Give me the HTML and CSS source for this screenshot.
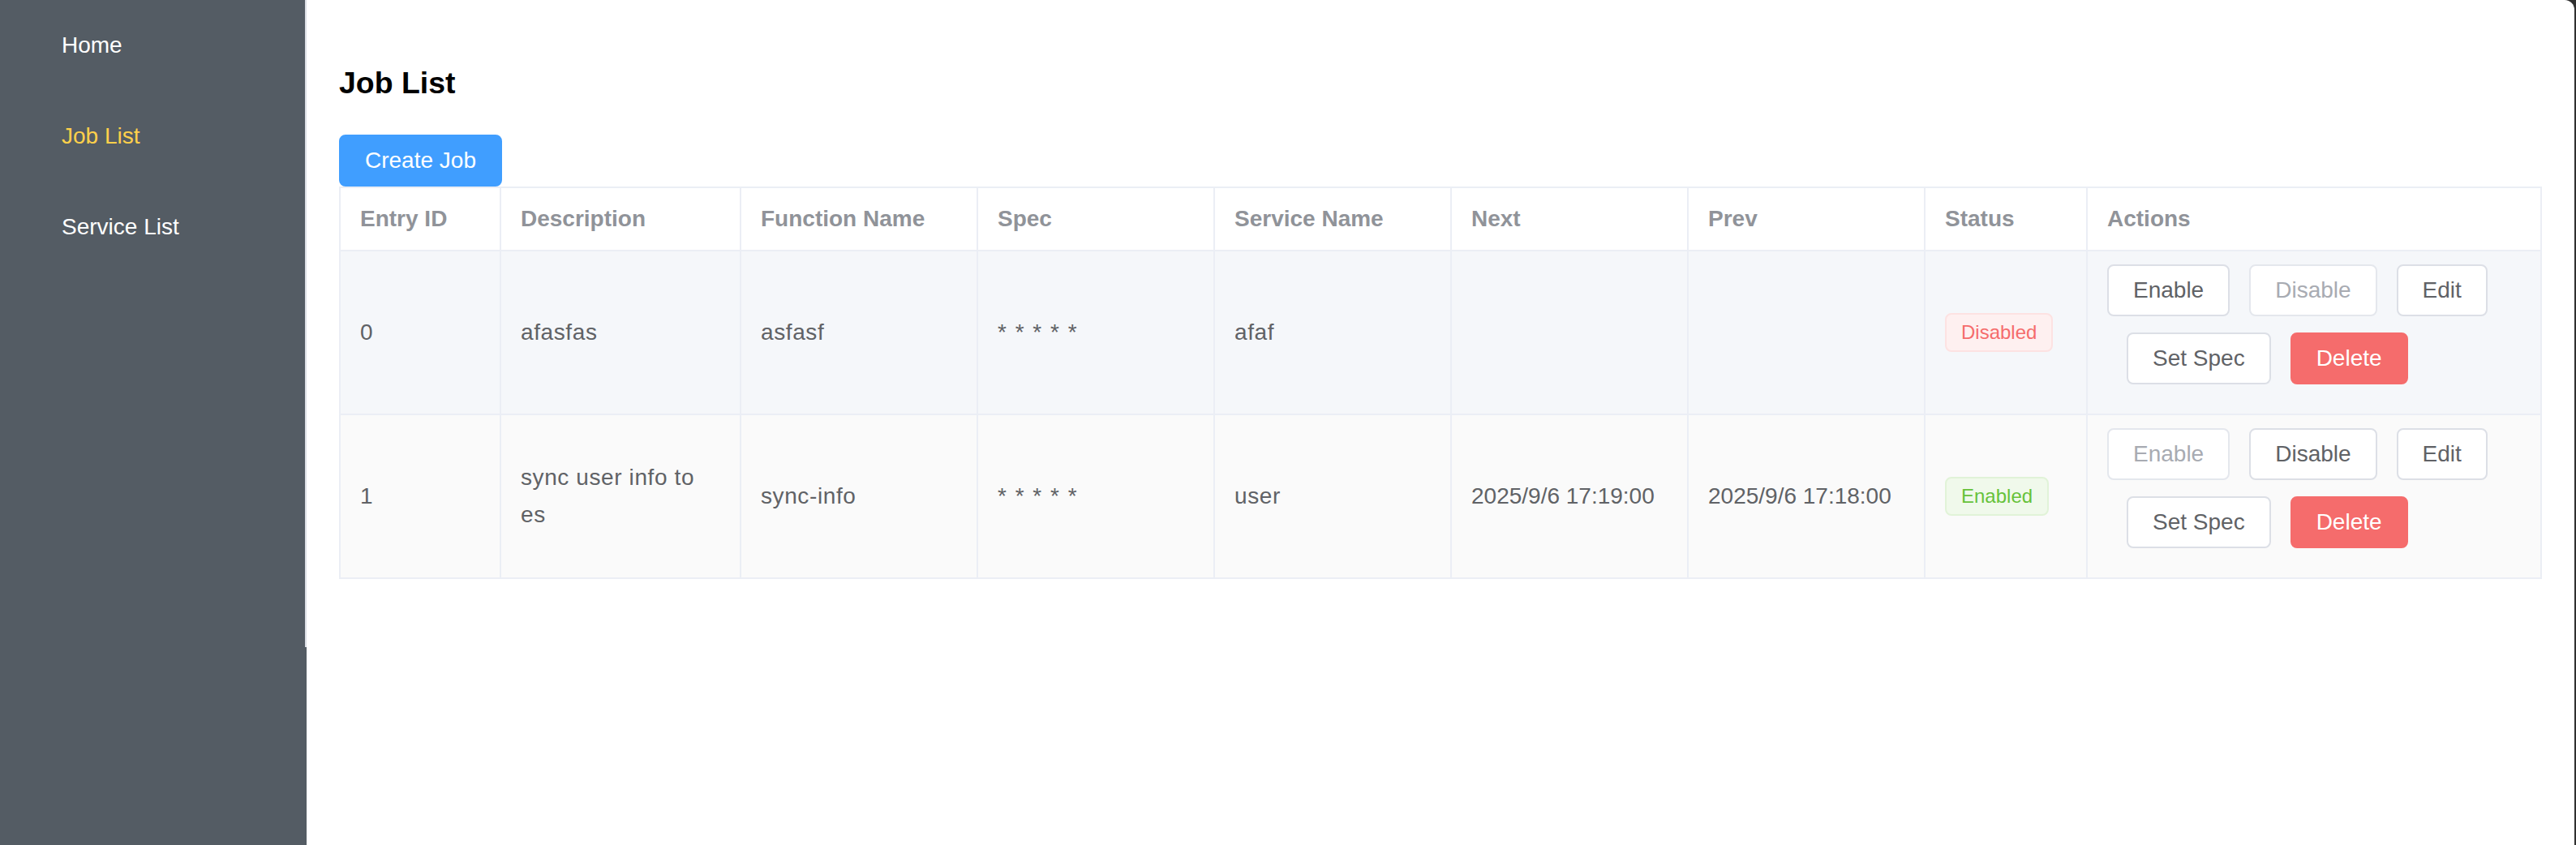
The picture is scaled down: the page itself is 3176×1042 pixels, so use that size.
FILE: index.html
```html
<!DOCTYPE html>
<html lang="en">
<head>
<meta charset="utf-8">
<title>Job List</title>
<link rel="stylesheet" href="styles.css">
</head>
<body>
<div class="app">
  <aside class="aside">
    <ul class="menu">
      <li class="menu-item">Home</li>
      <li class="menu-item is-active">Job List</li>
      <li class="menu-item">Service List</li>
    </ul>
  </aside>
  <main class="main">
    <h3 class="title">Job List</h3>
    <div class="toolbar"><button class="btn btn-primary">Create Job</button></div>
    <table class="table">
      <colgroup>
        <col class="c-id"><col class="c-desc"><col class="c-std"><col class="c-std"><col class="c-std"><col class="c-std"><col class="c-std"><col class="c-status"><col class="c-actions">
      </colgroup>
      <thead>
        <tr>
          <th>Entry ID</th>
          <th>Description</th>
          <th>Function Name</th>
          <th>Spec</th>
          <th>Service Name</th>
          <th>Next</th>
          <th>Prev</th>
          <th>Status</th>
          <th>Actions</th>
        </tr>
      </thead>
      <tbody>
        <tr class="row-hover">
          <td>0</td>
          <td>afasfas</td>
          <td>asfasf</td>
          <td class="spec">* * * * *</td>
          <td>afaf</td>
          <td class="time"></td>
          <td class="time"></td>
          <td><span class="tag tag-danger">Disabled</span></td>
          <td class="actions">
            <div class="btn-group">
              <button class="btn">Enable</button><button class="btn is-disabled">Disable</button><button class="btn">Edit</button><button class="btn">Set Spec</button><button class="btn btn-danger">Delete</button>
            </div>
          </td>
        </tr>
        <tr class="row-striped">
          <td>1</td>
          <td>sync user info to es</td>
          <td>sync-info</td>
          <td class="spec">* * * * *</td>
          <td>user</td>
          <td class="time">2025/9/6 17:19:00</td>
          <td class="time">2025/9/6 17:18:00</td>
          <td><span class="tag tag-success">Enabled</span></td>
          <td class="actions">
            <div class="btn-group">
              <button class="btn is-disabled">Enable</button><button class="btn">Disable</button><button class="btn">Edit</button><button class="btn">Set Spec</button><button class="btn btn-danger">Delete</button>
            </div>
          </td>
        </tr>
      </tbody>
    </table>
  </main>
</div>
</body>
</html>
```
FILE: styles.css
```css
html, body {
  margin: 0;
  padding: 0;
}
body {
  background: #303030;
  font-family: "Liberation Sans", Arial, sans-serif;
  width: 3176px;
  height: 1042px;
  overflow: hidden;
}
.app {
  display: flex;
  width: 3174px;
  height: 1042px;
  background: #ffffff;
  border-top-right-radius: 12px;
  overflow: hidden;
}
.aside {
  width: 378px;
  flex: 0 0 378px;
  background: #545c64;
}
.menu {
  list-style: none;
  margin: 0;
  padding: 0;
  width: 378px;
  height: 798px;
  box-sizing: border-box;
  border-right: 2px solid #dcdfe6;
  background: #545c64;
}
.menu-item {
  height: 112px;
  line-height: 112px;
  padding-left: 76px;
  font-size: 28px;
  color: #ffffff;
  white-space: nowrap;
}
.menu-item.is-active {
  color: #ffd04b;
}
.main {
  flex: 1;
  min-width: 0;
  box-sizing: border-box;
  padding: 40px;
}
.title {
  margin: 40px 0 42px;
  font-size: 37.44px;
  line-height: 44px;
  font-weight: bold;
  color: #000000;
}
.toolbar {
  display: flex;
}
.btn {
  display: inline-flex;
  align-items: center;
  justify-content: center;
  box-sizing: border-box;
  height: 64px;
  padding: 0 30px;
  border: 2px solid #dcdfe6;
  border-radius: 8px;
  background: #ffffff;
  color: #606266;
  font-family: "Liberation Sans", Arial, sans-serif;
  font-size: 28px;
  line-height: 1;
  white-space: nowrap;
  cursor: pointer;
}
.btn-primary {
  background: #409eff;
  border-color: #409eff;
  color: #ffffff;
}
.btn-danger {
  background: #f56c6c;
  border-color: #f56c6c;
  color: #ffffff;
}
.btn.is-disabled {
  color: #a8abb2;
  border-color: #e4e7ed;
  background: #ffffff;
  cursor: not-allowed;
}
.table {
  width: 2716px;
  table-layout: fixed;
  border-collapse: separate;
  border-spacing: 0;
  border-top: 2px solid #ebeef5;
  border-left: 2px solid #ebeef5;
  font-size: 28px;
}
.c-id { width: 198px; }
.c-desc { width: 296px; }
.c-std { width: 292px; }
.c-status { width: 200px; }
.c-actions { width: 560px; }
.table th,
.table td {
  box-sizing: border-box;
  border-right: 2px solid #ebeef5;
  border-bottom: 2px solid #ebeef5;
  padding: 16px 24px;
  text-align: left;
  vertical-align: middle;
}
.table th {
  line-height: 44px;
  font-weight: bold;
  color: #909399;
  background: #ffffff;
  white-space: nowrap;
}
.table td {
  line-height: 46px;
  color: #606266;
  letter-spacing: 0.6px;
  word-break: break-word;
}
.table td.spec {
  letter-spacing: 1.5px;
}
.table td.time {
  letter-spacing: 0;
  white-space: nowrap;
}
.row-hover td {
  background: #f5f7fa;
}
.row-striped td {
  background: #fafafa;
}
.tag {
  display: inline-flex;
  align-items: center;
  box-sizing: border-box;
  height: 48px;
  padding: 0 18px;
  border: 2px solid;
  border-radius: 8px;
  font-size: 24px;
  line-height: 1;
  letter-spacing: 0;
  vertical-align: middle;
  white-space: nowrap;
}
.tag-danger {
  background: #fef0f0;
  border-color: #fde2e2;
  color: #f56c6c;
}
.tag-success {
  background: #f0f9eb;
  border-color: #e1f3d8;
  color: #67c23a;
}
.table td.actions {
  letter-spacing: 0;
  line-height: 1;
}
.btn-group {
  display: flex;
  flex-wrap: wrap;
}
.btn-group .btn {
  margin-bottom: 20px;
}
.btn-group .btn + .btn {
  margin-left: 24px;
}
```
